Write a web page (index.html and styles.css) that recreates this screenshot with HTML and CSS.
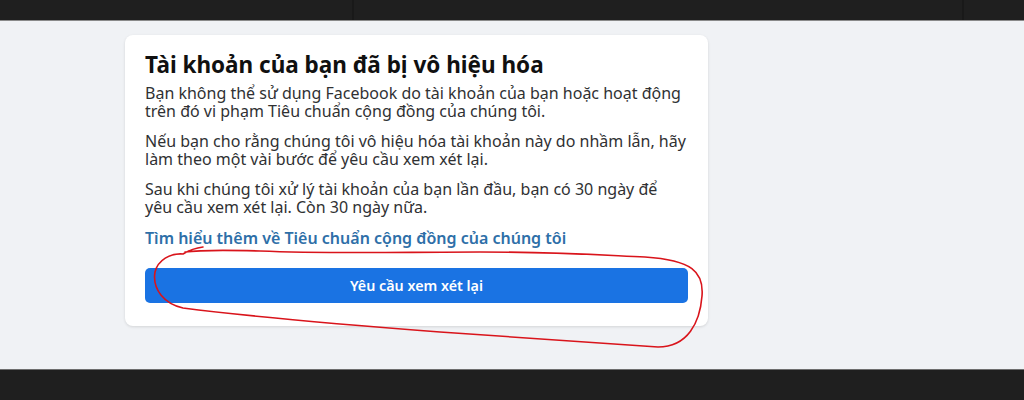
FILE: index.html
```html
<!DOCTYPE html>
<html lang="vi">
<head>
<meta charset="utf-8">
<link rel="stylesheet" href="styles.css">
</head>
<body>
<div class="topbar">
  <div class="tb-seg tb-left"></div>
  <div class="tb-seg tb-mid"></div>
  <div class="tb-seg tb-right"></div>
</div>
<main class="main">
  <section class="card">
    <h1 class="title">Tài khoản của bạn đã bị vô hiệu hóa</h1>
    <p class="text">Bạn không thể sử dụng Facebook do tài khoản của bạn hoặc hoạt động trên đó vi phạm Tiêu chuẩn cộng đồng của chúng tôi.</p>
    <p class="text">Nếu bạn cho rằng chúng tôi vô hiệu hóa tài khoản này do nhầm lẫn, hãy làm theo một vài bước để yêu cầu xem xét lại.</p>
    <p class="text">Sau khi chúng tôi xử lý tài khoản của bạn lần đầu, bạn có 30 ngày để yêu cầu xem xét lại. Còn 30 ngày nữa.</p>
    <a class="link" href="#">Tìm hiểu thêm về Tiêu chuẩn cộng đồng của chúng tôi</a>
    <button class="btn">Yêu cầu xem xét lại</button>
  </section>
  <svg class="scribble" width="1024" height="400" viewBox="0 0 1024 400">
    <path d="M 203 247 C 195 248, 188 251, 183 254 C 170 253, 158 260, 155 272 C 152 290, 165 304, 183 308 C 260 318, 350 325, 440 332 C 520 338, 600 343, 658 347 C 688 347, 700 322, 702 296 C 704 272, 692 260, 645 257 C 600 255, 560 252, 480 252 C 400 252, 330 254, 260 251 C 225 250, 200 250, 185 252" fill="none" stroke="#d9141b" stroke-width="1.6" stroke-linecap="round"/>
  </svg>
</main>
<div class="bottombar"></div>
</body>
</html>
```
FILE: styles.css
```css
html, body {
  margin: 0;
  padding: 0;
}
body {
  width: 1024px;
  height: 400px;
  overflow: hidden;
  display: flex;
  flex-direction: column;
  background: #f0f2f5;
  font-family: "Segoe UI", "Noto Sans", "Liberation Sans", sans-serif;
}
.topbar {
  height: 20px;
  flex: none;
  display: flex;
  background: #1f1f1f;
  border-bottom: 1px solid #8a8a8a;
}
.tb-seg {
  height: 100%;
}
.tb-left {
  width: 352px;
  border-right: 2px solid #191919;
}
.tb-mid {
  width: 608px;
  border-right: 2px solid #191919;
}
.tb-right {
  flex: 1;
}
.main {
  position: relative;
  flex: 1;
  padding: 14px 0 0 125px;
}
.card {
  width: 543px;
  background: #fff;
  border-radius: 8px;
  box-shadow: 0 1px 3px rgba(0, 0, 0, 0.12);
  padding: 16px 20px 23px 20px;
  display: flex;
  flex-direction: column;
}
.title {
  margin: 0 0 5px 0;
  font-size: 22.5px;
  line-height: 28px;
  font-weight: 700;
  color: #101010;
}
.text {
  margin: 0 0 12px 0;
  font-size: 16px;
  line-height: 18px;
  color: #303133;
}
.link {
  font-size: 16px;
  line-height: 20px;
  font-weight: 600;
  color: #2e6fa8;
  text-decoration: none;
  margin-top: 0;
}
.btn {
  margin-top: 20px;
  height: 35px;
  border: none;
  border-radius: 5px;
  background: #1a73e3;
  color: #fff;
  font-family: inherit;
  font-size: 14.3px;
  font-weight: 600;
  padding: 0;
}
.scribble {
  position: absolute;
  left: 0;
  top: -21px;
  pointer-events: none;
}
.bottombar {
  height: 30px;
  flex: none;
  background: #1f1f1f;
  border-top: 1px solid #6e6e6e;
}
```
